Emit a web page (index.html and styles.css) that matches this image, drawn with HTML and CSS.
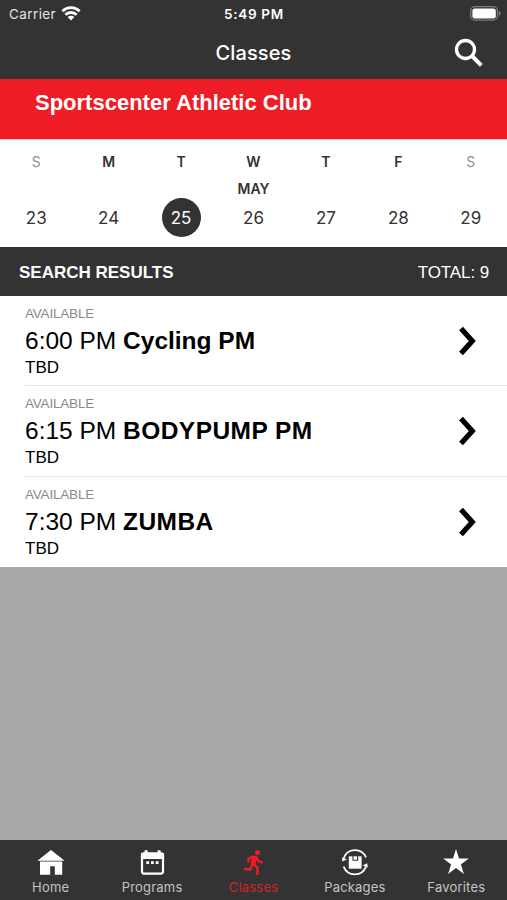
FILE: index.html
```html
<!DOCTYPE html>
<html lang="en">

<head>
    <meta charset="UTF-8">
    <meta name="viewport" content="width=device-width, initial-scale=1.0">
    <title>Classes</title>
    <link rel="stylesheet" href="styles.css">
</head>

<body>
    <div class="app">
        <header class="top">
            <div class="status-bar">
                <div class="carrier">
                    <span>Carrier</span>
                    <svg width="20" height="15" viewBox="0 0 20 15" fill="none" stroke="#fff" stroke-width="2.8">
                        <path d="M1.4 5.2a12.3 12.3 0 0 1 17.2 0"/>
                        <path d="M4.4 8.8a8 8 0 0 1 11.2 0"/>
                        <path d="M10 14.4 6.7 11.1a4.600 4.600 0 0 1 6.600 0z" fill="#fff" stroke="none"/>
                    </svg>
                </div>
                <span class="time">5:49 PM</span>
                <svg class="battery" width="31" height="15" viewBox="0 0 31 15">
                    <rect x="0.7" y="0.7" width="26.8" height="13.4" rx="4.2" fill="none" stroke="#7c7c7c" stroke-width="1.3"/>
                    <rect x="2.4" y="2.4" width="23.4" height="10" rx="2.5" fill="#fff"/>
                    <path d="M29 5.2v4.4c1-.4 1.6-1.2 1.6-2.2s-.6-1.8-1.6-2.2z" fill="#8a8a8a"/>
                </svg>
            </div>
            <div class="nav-bar">
                <h1>Classes</h1>
                <svg class="search" width="30" height="30" viewBox="0 0 30 30" fill="none" stroke="#fff">
                    <circle cx="11.5" cy="11.5" r="9" stroke-width="3.3"/>
                    <path d="M18 18l9.3 9.3" stroke-width="4"/>
                </svg>
            </div>
        </header>

        <div class="banner">Sportscenter Athletic Club</div>

        <div class="calendar">
            <div class="day weekend"><b>S</b><i></i><span>23</span></div>
            <div class="day"><b>M</b><i></i><span>24</span></div>
            <div class="day selected"><b>T</b><i></i><span>25</span></div>
            <div class="day"><b>W</b><i>MAY</i><span>26</span></div>
            <div class="day"><b>T</b><i></i><span>27</span></div>
            <div class="day"><b>F</b><i></i><span>28</span></div>
            <div class="day weekend"><b>S</b><i></i><span>29</span></div>
        </div>

        <div class="results-header">
            <h2>SEARCH RESULTS</h2>
            <span>TOTAL: 9</span>
        </div>

        <ul class="results">
            <li>
                <div>
                    <p class="state">AVAILABLE</p>
                    <p class="name">6:00 PM <b>Cycling PM</b></p>
                    <p class="coach">TBD</p>
                </div>
                <svg width="18" height="30" viewBox="0 0 18 30" fill="none" stroke="#000" stroke-width="5.2"><path d="M2 2.5 13.3 15 2 27.500"/></svg>
            </li>
            <li>
                <div>
                    <p class="state">AVAILABLE</p>
                    <p class="name">6:15 PM <b class="caps">BODYPUMP PM</b></p>
                    <p class="coach">TBD</p>
                </div>
                <svg width="18" height="30" viewBox="0 0 18 30" fill="none" stroke="#000" stroke-width="5.2"><path d="M2 2.5 13.3 15 2 27.500"/></svg>
            </li>
            <li>
                <div>
                    <p class="state">AVAILABLE</p>
                    <p class="name">7:30 PM <b class="caps">ZUMBA</b></p>
                    <p class="coach">TBD</p>
                </div>
                <svg width="18" height="30" viewBox="0 0 18 30" fill="none" stroke="#000" stroke-width="5.2"><path d="M2 2.5 13.3 15 2 27.500"/></svg>
            </li>
        </ul>

        <nav class="tabs">
            <a class="tab">
                <svg width="28" height="28" viewBox="0 0 28 28" fill="#fff">
                    <path d="M14 1 27.6 11.800H.4z"/>
                    <path d="M3 12.500h22.200v13.300h-7.400v-8.600h-4.600v8.600H3z"/>
                </svg>
                <span>Home</span>
            </a>
            <a class="tab">
                <svg width="28" height="28" viewBox="0 0 28 28">
                    <rect x="4" y="4.600" width="21" height="20" rx="2" fill="none" stroke="#fff" stroke-width="2.200"/>
                    <path d="M2.900 10V5.500a2 2 0 0 1 2-2h1.700V1.200h3v2.300h10V1.200h3v2.300h1.500a2 2 0 0 1 2 2V10z" fill="#fff"/>
                    <path d="M8.300 12.200h2.800v2.800H8.300zM13 12.200h2.800v2.800H13zM17.700 12.200h2.800v2.800h-2.800z" fill="#fff"/>
                </svg>
                <span>Programs</span>
            </a>
            <a class="tab active">
                <svg width="28" height="28" viewBox="0 0 28 28" fill="none" stroke="#ee1c25" stroke-width="2.400">
                    <circle cx="18.400" cy="3.400" r="2.500" fill="#ee1c25" stroke="none"/>
                    <path d="M12.600 8.200 18.200 8 16.200 17 11.800 16z" fill="#ee1c25" stroke="none"/>
                    <path d="M9.400 13.400l.3-3.800 4.200-2.100 3.400.8 2 3.800 4.500 1.500"/>
                    <path d="M13.800 14.600 18.400 18.500v7.500"/>
                    <path d="M13.200 15.500l-2 5.200-6-1"/>
                </svg>
                <span>Classes</span>
            </a>
            <a class="tab">
                <svg width="28" height="28" viewBox="0 0 28 28" fill="none" stroke="#fff" stroke-width="1.700">
                    <path d="M2.600 9.400a12 12 0 0 1 22.400-1"/>
                    <path d="M2.600 17.600a12 12 0 0 0 22.400 0"/>
                    <path d="M.8 8.400l.8 4.200 4.400-2.400zM26.800 18.600l-.6-4.400-4.600 2.400z" fill="#fff" stroke="none"/>
                    <path d="M7.800 7.300h12.800v12.400H7.800z" fill="#fff" stroke="none"/>
                    <path d="M12 7v4.300h4.600V7" stroke="#333" stroke-width="1.100"/>
                </svg>
                <span>Packages</span>
            </a>
            <a class="tab">
                <svg width="28" height="28" viewBox="0 0 28 28" fill="#fff">
                    <path d="M14 0l3 9.600h9.700l-7.800 5.800 3 9.600-7.900-5.900L6.100 25l3-9.600-7.800-5.800H11z"/>
                </svg>
                <span>Favorites</span>
            </a>
        </nav>
    </div>
</body>

</html>
```

FILE: styles.css
```css
* {
    box-sizing: border-box;
}

body {
    margin: 0;
    font-family: "Liberation Sans", Arial, sans-serif;
    background: #a9a9a9;
}

h1, h2, p, ul {
    margin: 0;
    padding: 0;
}

.app {
    display: flex;
    flex-direction: column;
    width: 507px;
    height: 900px;
    overflow: hidden;
}

.top {
    height: 79px;
    background: #333;
    color: #fff;
    font-family: Inter, sans-serif;
}

.status-bar {
    display: grid;
    grid-template-columns: 1fr auto 1fr;
    align-items: center;
    height: 27px;
    padding: 0 6px 0 9px;
    font-size: 13.5px;
}

.carrier {
    display: flex;
    align-items: center;
    gap: 5px;
    color: #e4e4e4;
    letter-spacing: 0.4px;
}

.time {
    padding-right: 2px;
    font-weight: 600;
    letter-spacing: 0.7px;
}

.battery {
    justify-self: end;
}

.nav-bar {
    display: grid;
    grid-template-columns: 1fr auto 1fr;
    align-items: center;
    height: 51px;
    padding: 0 23px;
}

.nav-bar h1 {
    grid-column: 2;
    font-size: 20px;
    font-weight: 500;
    letter-spacing: 0.1px;
}

.search {
    justify-self: end;
}

.banner {
    height: 61px;
    padding: 11px 35px;
    background: #ee1c25;
    border-bottom: 1px solid #fbc9c6;
    color: #fff;
    font-size: 22px;
    font-weight: bold;
    line-height: 26px;
}

.calendar {
    display: grid;
    grid-template-columns: repeat(7, 1fr);
    height: 107px;
    background: #fff;
    font-family: Inter, sans-serif;
}

.day {
    display: flex;
    flex-direction: column;
    align-items: center;
    padding-top: 12px;
    color: #333;
}

.day b {
    font-size: 14px;
    font-weight: 600;
    line-height: 20px;
}

.day i {
    height: 26px;
    font-size: 14px;
    font-style: normal;
    font-weight: 600;
    line-height: 34px;
}

.day span {
    width: 39px;
    height: 39px;
    border-radius: 50%;
    font-size: 17px;
    line-height: 41px;
    text-align: center;
}

.weekend b {
    color: #8e8e8e;
    font-weight: 400;
}

.selected span {
    background: #333;
    color: #fff;
}

.results-header {
    display: flex;
    justify-content: space-between;
    align-items: center;
    height: 49px;
    padding: 3px 18px 0 19px;
    background: #333;
    color: #fff;
    font-size: 17px;
}

.results-header h2 {
    font-size: 17px;
}

.results-header span {
    letter-spacing: -0.1px;
}

.results {
    flex: 1;
    list-style: none;
}

.results li {
    display: flex;
    justify-content: space-between;
    height: 90.4px;
    padding: 9px 30px 0 25px;
    background: linear-gradient(#e4e4e4, #e4e4e4) 25px 100% / 100% 1px no-repeat #fff;
}

.results li:last-child {
    background: #fff;
}

.results svg {
    margin-top: 21px;
}

.state {
    color: #8a8a8a;
    font-size: 13.5px;
    line-height: 18px;
    letter-spacing: -0.2px;
}

.name {
    font-size: 24.5px;
    line-height: 36px;
}

.caps {
    letter-spacing: 0.45px;
}

.coach {
    font-size: 17px;
    line-height: 18px;
}

.tabs {
    display: grid;
    grid-template-columns: repeat(5, 1fr);
    height: 60px;
    background: #333;
    font-family: Inter, sans-serif;
}

.tab {
    display: flex;
    flex-direction: column;
    align-items: center;
    padding-top: 9px;
    color: #c4c4c4;
    font-size: 13px;
    line-height: 20px;
    letter-spacing: 0.2px;
}

.tab.active {
    color: #d3222a;
}
```
